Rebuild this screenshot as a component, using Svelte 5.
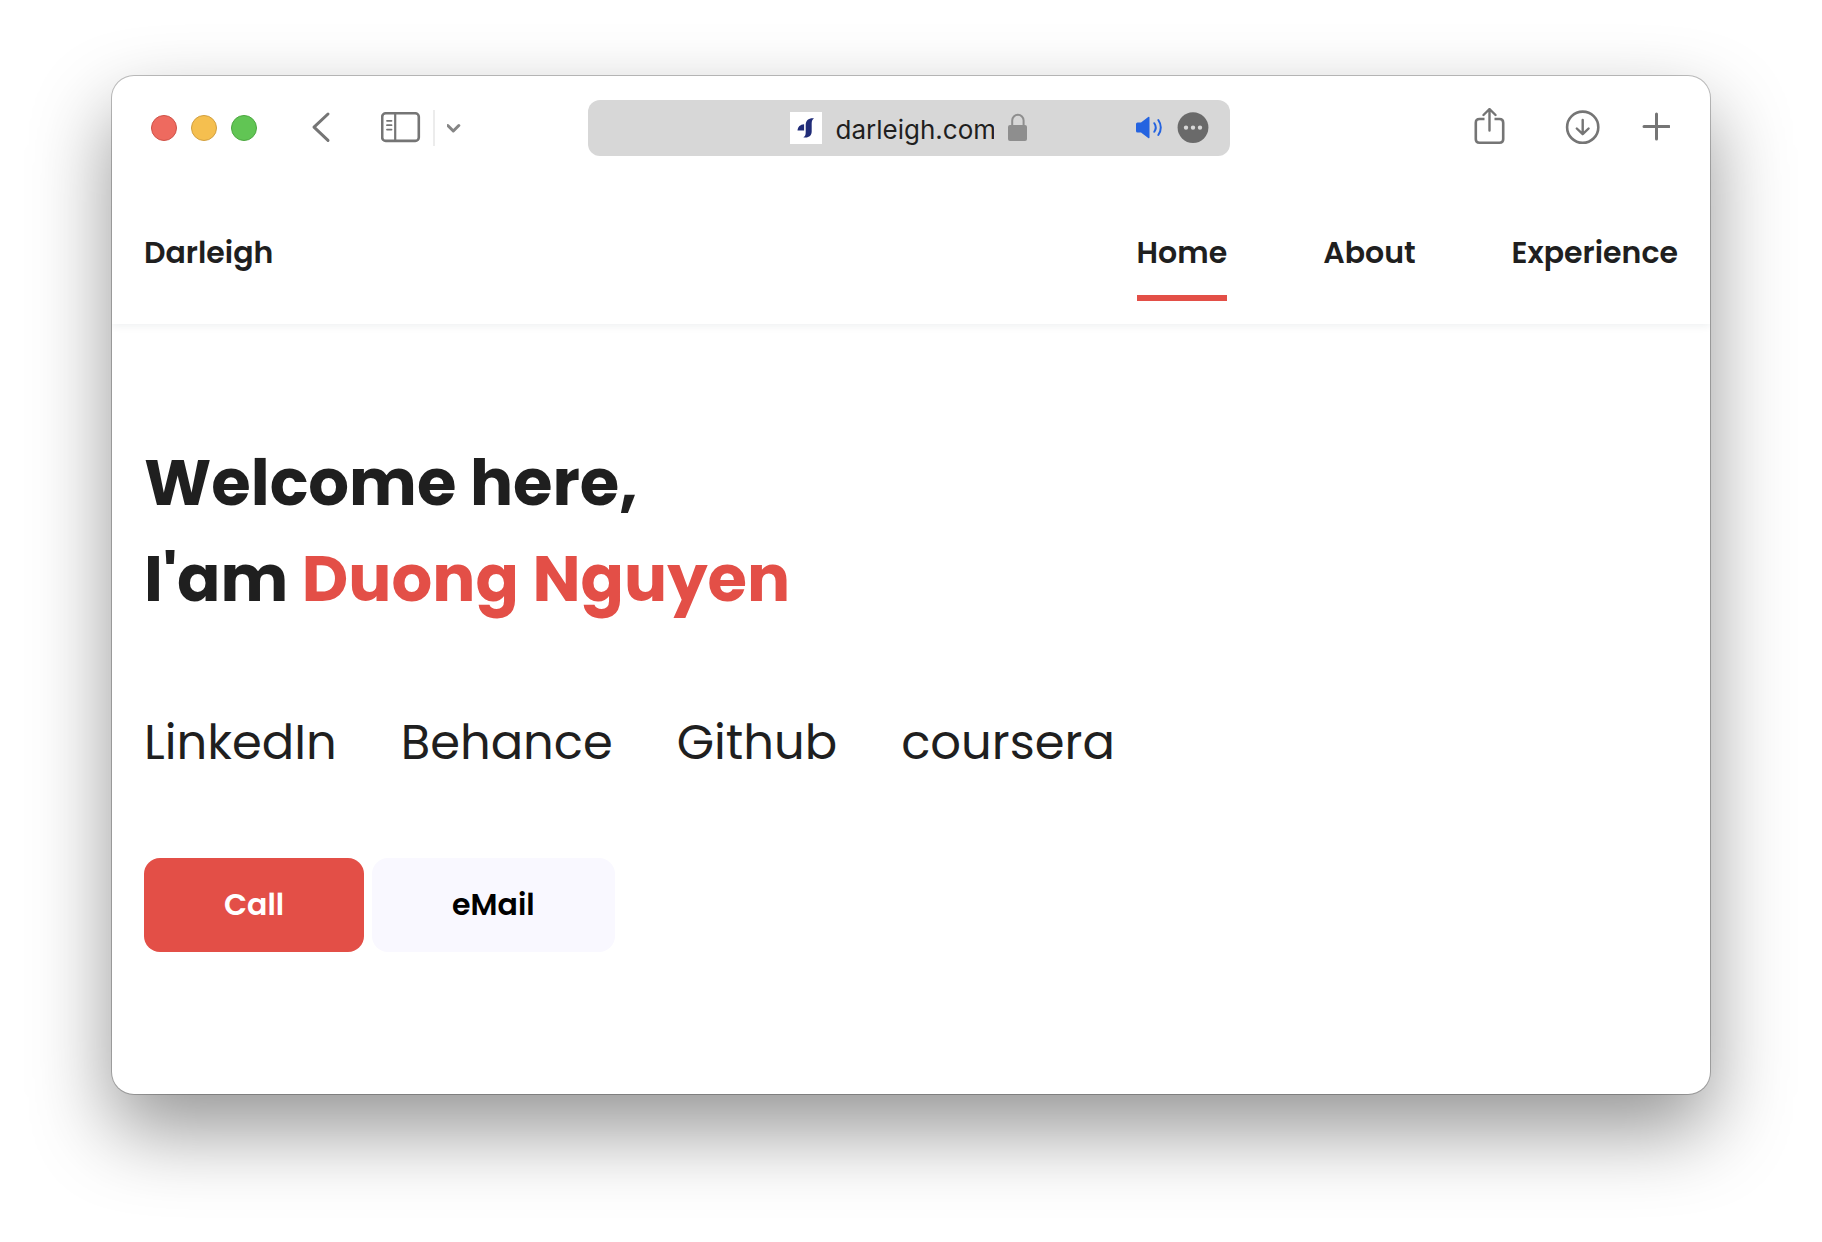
<script>
  let current = $state('Home');
  const pages = ['Home', 'About', 'Experience'];
  const profiles = ['LinkedIn', 'Behance', 'Github', 'coursera'];
</script>

<div class="desktop">
  <div class="window">
    <div class="toolbar">
      <div class="group">
        <div class="lights">
          <button class="light red" aria-label="Close window"></button>
          <button class="light amber" aria-label="Minimise window"></button>
          <button class="light green" aria-label="Zoom window"></button>
        </div>
        <button class="icon" aria-label="Back">
          <svg width="32" height="36" viewBox="0 0 32 36"><path d="M23 4 9 17.200l14 13.200" stroke-width="3" /></svg>
        </button>
        <div class="sidebar">
          <button class="icon" aria-label="Show sidebar">
            <svg width="40" height="32" viewBox="0 0 40 32">
              <rect x="1.200" y="1.300" width="36.600" height="27.600" rx="3.500" stroke-width="2.600" />
              <path d="M14.200 1.500v27" stroke-width="2.200" />
              <path d="M6 8.800h4.500M6 13.200h4.500M6 17.600h4.500" stroke-width="1.800" />
            </svg>
          </button>
          <span class="divider"></span>
          <button class="icon light-icon" aria-label="Tab groups">
            <svg width="14" height="32" viewBox="0 0 14 32"><path d="M.8 13.500 6.300 19l5.500-5.500" stroke-width="3" /></svg>
          </button>
        </div>
      </div>

      <div class="address">
        <span></span>
        <div class="site">
          <svg width="32" height="32" viewBox="0 0 32 32" aria-hidden="true">
            <path d="M0 0h32v32H0z" fill="#fff" stroke="none" />
            <path d="M24 6.300c-5.500-.4-8.300 2.200-8.300 6.700v7c0 3-.5 4.500-2.400 5.300 5 1 8.400-1.300 8.400-5.800v-8c0-2.500.8-4 2.300-5.200zM7.500 18.400c.3-3.600 2.600-5.900 6.600-6.200v6.200z" fill="#202c78" stroke="none" />
          </svg>
          <input aria-label="Address" value="darleigh.com" />
          <svg width="20" height="32" viewBox="0 0 20 32" aria-hidden="true">
            <path d="M4.200 15V8.500a5.700 5.700 0 0 1 11.400 0V15" stroke="#8e8e8e" stroke-width="2" />
            <rect x="0" y="13" width="19" height="16" rx="2" fill="#8e8e8e" stroke="none" />
          </svg>
        </div>
        <div class="actions">
          <button class="icon" aria-label="Mute this tab">
            <svg width="28" height="32" viewBox="0 0 28 32">
              <path d="M1 12q0-1.500 1.500-1.500H6l7.200-5.600q1.300-.7 1.300.8v19.600q0 1.500-1.300.8L6 20.500H2.500Q1 20.500 1 19z" fill="#2463e0" stroke="none" />
              <path d="M19.300 11.200c1.700 2.500 1.700 6.100 0 8.600M23.300 8c3.300 4.500 3.300 10.500 0 15" stroke="#2463e0" stroke-width="2" />
            </svg>
          </button>
          <button class="icon" aria-label="Page menu">
            <svg width="32" height="32" viewBox="0 0 32 32">
              <circle cx="16" cy="15.600" r="15.400" fill="#6a6a6a" stroke="none" />
              <path d="M6.800 15.600a2.200 2.200 0 1 0 4.400 0 2.200 2.200 0 1 0-4.400 0M13.800 15.600a2.200 2.200 0 1 0 4.400 0 2.200 2.200 0 1 0-4.400 0M20.800 15.600a2.200 2.200 0 1 0 4.400 0 2.200 2.200 0 1 0-4.400 0" fill="#d7d7d7" stroke="none" />
            </svg>
          </button>
        </div>
      </div>

      <div class="group tools">
        <button class="icon" aria-label="Share">
          <svg width="32" height="40" viewBox="0 0 32 40">
            <path d="M11.500 11H6.500Q2.800 11 2.800 14.700v16.500q0 3.500 3.700 3.500h20q3.700 0 3.700-3.500V14.700q0-3.700-3.700-3.700h-5" stroke-width="2.600" stroke-linecap="butt" />
            <path d="M16.500 22.500V1.500M10.500 7l6-6 6 6" stroke-width="2.400" />
          </svg>
        </button>
        <div class="pair">
          <button class="icon" aria-label="Downloads">
            <svg width="36" height="36" viewBox="0 0 36 36">
              <circle cx="17.700" cy="17.200" r="15.600" stroke-width="2.600" />
              <path d="M17.700 10v14M11.800 18.500l5.900 5.700 5.900-5.700" stroke-width="2.400" />
            </svg>
          </button>
          <button class="icon" aria-label="New tab">
            <svg width="28" height="32" viewBox="0 0 28 32"><path d="M14.500 2v25M2 14.500h25" stroke-width="3" /></svg>
          </button>
        </div>
      </div>
    </div>

    <header>
      <a class="brand" href="#home">Darleigh</a>
      <nav aria-label="Main">
        {#each pages as page}
          <a href={'#' + page.toLowerCase()} class:active={current === page} onclick={() => (current = page)}>{page}</a>
        {/each}
      </nav>
    </header>

    <main>
      <h1>Welcome here,<br />I'am <span class="name">Duong Nguyen</span></h1>
      <div class="profiles">
        {#each profiles as profile}
          <a href={'#' + profile.toLowerCase()}>{profile}</a>
        {/each}
      </div>
      <div class="contact">
        <button class="primary">Call</button>
        <button>eMail</button>
      </div>
    </main>
  </div>
</div>

<style>
  :global(body) {
    background: #fff;
  }
  * {
    box-sizing: border-box;
  }
  .desktop {
    padding: 76px 112px 148px;
    font-family: Poppins, Inter, sans-serif;
    color: #1f1f1f;
  }
  .window {
    min-height: calc(100vh - 224px);
    background: #fff;
    border-radius: 22px;
    box-shadow:
      0 0 0 1px rgba(0, 0, 0, 0.24),
      0 36px 80px rgba(0, 0, 0, 0.42);
  }
  a {
    color: inherit;
    text-decoration: none;
  }
  button {
    padding: 0;
    border: 0;
    font: inherit;
    cursor: pointer;
  }
  svg {
    display: block;
    fill: none;
    stroke: #757575;
    stroke-linecap: round;
    stroke-linejoin: round;
  }

  .toolbar {
    display: grid;
    grid-template-columns: 1fr minmax(0, 642px) 1fr;
    align-items: center;
    height: 104px;
    padding: 0 40px 0 36px;
  }
  .group {
    display: flex;
    align-items: center;
    gap: 44px;
  }
  .tools {
    justify-content: flex-end;
    gap: 60px;
  }
  .pair {
    display: flex;
    align-items: center;
    gap: 41px;
  }
  .icon {
    background: none;
  }
  .light-icon svg {
    stroke: #858585;
  }
  .lights {
    display: flex;
    gap: 14px;
    padding: 0 4px 0 3px;
  }
  .light {
    width: 26px;
    height: 26px;
    border: 1px solid #cf5046;
    border-radius: 50%;
    background: #ee6a5f;
  }
  .amber {
    border-color: #d29f3e;
    background: #f5bf4f;
  }
  .green {
    border-color: #4ba73f;
    background: #61c554;
  }
  .sidebar {
    display: flex;
    align-items: center;
    gap: 12px;
  }
  .divider {
    width: 2px;
    height: 36px;
    background: #ececec;
  }
  .address {
    display: grid;
    grid-template-columns: 1fr auto 1fr;
    align-items: center;
    height: 56px;
    padding: 0 21px 0 20px;
    border-radius: 12px;
    background: #d7d7d7;
  }
  .site {
    display: flex;
    align-items: center;
    gap: 14px;
  }
  input {
    width: 158px;
    padding: 4px 0 0;
    border: 0;
    outline: 0;
    background: none;
    color: #1f1f1f;
    font: 26px/32px Inter, sans-serif;
  }
  .actions {
    display: flex;
    justify-content: flex-end;
    gap: 14px;
  }

  header {
    display: flex;
    justify-content: space-between;
    height: 144px;
    padding: 0 32px;
    box-shadow: 0 2px 8px rgba(20, 40, 60, 0.07);
    clip-path: inset(0 0 -12px 0);
    font-size: 30px;
    font-weight: 600;
    line-height: 48px;
  }
  .brand {
    padding-top: 49px;
  }
  nav {
    display: flex;
    align-items: flex-start;
    gap: 96px;
  }
  nav a {
    padding: 49px 0 18px;
    border-bottom: 6px solid transparent;
  }
  nav a.active {
    border-color: #e34f47;
  }

  main {
    display: flex;
    flex-direction: column;
    padding: 111px 32px 80px;
  }
  h1 {
    margin: 0 0 80px;
    font-size: 64px;
    font-weight: 700;
    line-height: 96px;
  }
  .name {
    color: #e34f47;
  }
  .profiles {
    display: flex;
    flex-wrap: wrap;
    gap: 0 64px;
    margin-bottom: 79px;
    font-size: 48px;
    line-height: 72px;
  }
  .contact {
    display: flex;
    gap: 8px;
  }
  .contact button {
    padding: 23px 80px;
    border-radius: 16px;
    background: #f9f8ff;
    color: #000;
    font-size: 30px;
    font-weight: 600;
    line-height: 48px;
  }
  .contact .primary {
    background: #e34f47;
    color: #fff;
  }
</style>
